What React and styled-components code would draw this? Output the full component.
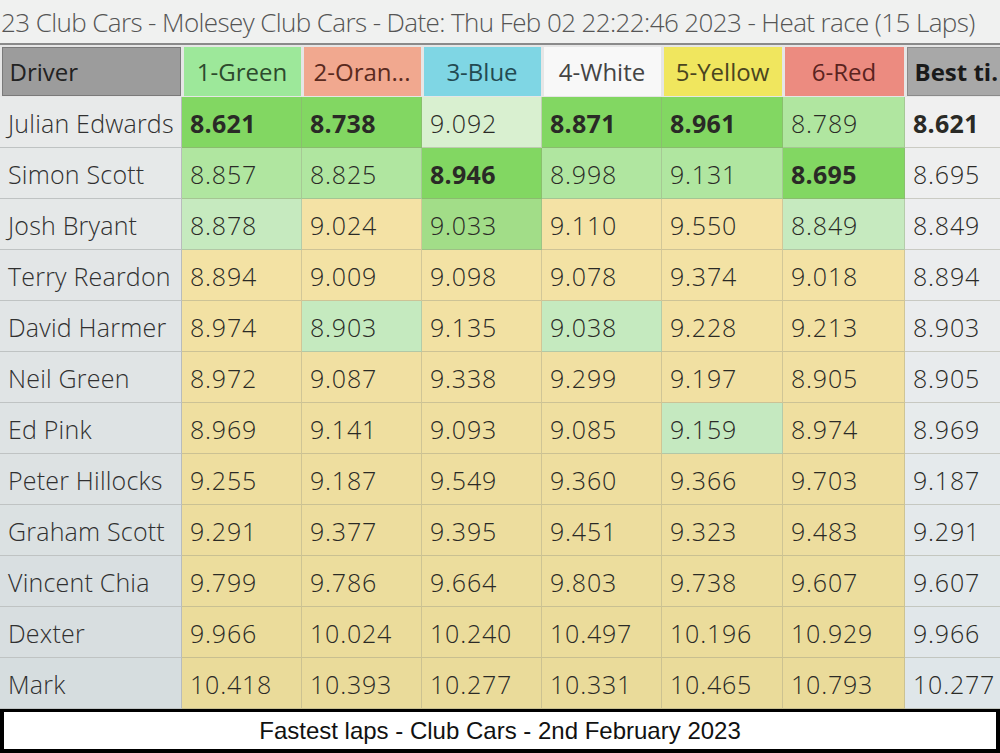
import React from 'react';
import styled, { createGlobalStyle } from 'styled-components';

const Global = createGlobalStyle`
  html, body { margin: 0; padding: 0; background: #ffffff; overflow: hidden; }
  #root { width: 1000px; height: 753px; }
`;

const COLS = '182px 120px 120px 120px 120px 121px 122px 110px';

const mix = (a, b, t) => {
  const pa = a.match(/\w\w/g).map(h => parseInt(h, 16));
  const pb = b.match(/\w\w/g).map(h => parseInt(h, 16));
  return '#' + pa.map((v, i) => Math.round(v + (pb[i] - v) * t).toString(16).padStart(2, '0')).join('');
};

const TONES = {
  B: ['82d762', '84d462'],
  G: ['a2dd88', 'a2dd88'],
  M: ['b0e6a0', 'b0e4a0'],
  L: ['c6ebbf', 'c4e8c0'],
  P: ['d9f0d0', 'd9f0d0'],
  Y: ['f6e4a8', 'eadb9a'],
};

const tone = (t, row) => {
  const [a, b] = TONES[t];
  return mix(a, b, row / 11);
};

const Page = styled.div`
  width: 1000px;
  height: 753px;
  display: flex;
  flex-direction: column;
  overflow: hidden;
  font-family: 'Open Sans', 'Noto Sans', sans-serif;
  background: #e9eaea;
`;

const TitleBar = styled.div`
  height: 43px;
  flex: none;
  display: flex;
  align-items: center;
  padding-left: 1px;
  background: #f0f1f0;
  border-bottom: 2px solid #8a8a8a;
  color: #555;
  font-size: 26px;
  font-weight: 300;
  letter-spacing: -0.6px;
  white-space: nowrap;
  overflow: hidden;
`;

const Grid = styled.div`
  display: grid;
  grid-template-columns: ${COLS};
  width: 1005px;
`;

const HeadRow = styled(Grid)`
  height: 52px;
  flex: none;
  background: #e6e6e6;
`;

const HeadCell = styled.div`
  margin: 2px 1.5px 1px;
  background: ${p => p.$bg};
  border: 1px solid ${p => p.$edge || 'transparent'};
  display: flex;
  align-items: center;
  justify-content: ${p => (p.$left ? 'flex-start' : 'center')};
  padding: 0 ${p => (p.$left ? '7px' : '0')};
  font-size: 24px;
  font-weight: ${p => (p.$bold ? 700 : 400)};
  color: ${p => p.$ink || '#333'};
  white-space: nowrap;
  overflow: hidden;
`;

const BodyRow = styled(Grid)`
  height: 51px;
  flex: none;
`;

const Cell = styled.div`
  display: flex;
  align-items: center;
  padding: 2px 0 0 8px;
  font-size: 25px;
  letter-spacing: ${p => (p.$bold ? '0.3px' : '0.8px')};
  color: #2a2a26;
  font-weight: ${p => (p.$bold ? 700 : 300)};
  background: ${p => p.$bg};
  border-right: 1px solid rgba(150, 150, 130, 0.35);
  border-bottom: 1px solid rgba(150, 150, 130, 0.4);
  white-space: nowrap;
  overflow: hidden;
`;

const NameCell = styled(Cell)`
  color: #303030;
  letter-spacing: 0.2px;
  border-right: 1px solid #b8bcbc;
  border-bottom: 1px solid #bfc3c3;
`;

const Caption = styled.div`
  flex: 1;
  background: #ffffff;
  border: 4px solid #000;
  border-top-width: 3px;
  display: flex;
  align-items: center;
  justify-content: center;
  font-family: 'Liberation Sans', Arial, sans-serif;
  font-size: 24px;
  color: #111;
`;

const heads = [
  { label: 'Driver', bg: '#9c9c9c', edge: '#7a7a7a', left: true, ink: '#222' },
  { label: '1-Green', bg: '#9de89a', ink: '#2d4a2d' },
  { label: '2-Oran...', bg: '#f1a88f', ink: '#5a2a1e' },
  { label: '3-Blue', bg: '#7fd6e4', ink: '#234a52' },
  { label: '4-White', bg: '#f8f8f8', ink: '#444' },
  { label: '5-Yellow', bg: '#f0e65e', ink: '#4a4520' },
  { label: '6-Red', bg: '#ec8b80', ink: '#5a231e' },
  { label: 'Best ti.', bg: '#a8a8a8', edge: '#8a8a8a', left: true, bold: true, ink: '#1a1a1a' },
];

const rows = [
  ['Julian Edwards', ['8.621B', '8.738B', '9.092P', '8.871B', '8.961B', '8.789M'], '8.621', true],
  ['Simon Scott', ['8.857M', '8.825M', '8.946B', '8.998M', '9.131M', '8.695B'], '8.695'],
  ['Josh Bryant', ['8.878L', '9.024Y', '9.033G', '9.110Y', '9.550Y', '8.849L'], '8.849'],
  ['Terry Reardon', ['8.894Y', '9.009Y', '9.098Y', '9.078Y', '9.374Y', '9.018Y'], '8.894'],
  ['David Harmer', ['8.974Y', '8.903L', '9.135Y', '9.038L', '9.228Y', '9.213Y'], '8.903'],
  ['Neil Green', ['8.972Y', '9.087Y', '9.338Y', '9.299Y', '9.197Y', '8.905Y'], '8.905'],
  ['Ed Pink', ['8.969Y', '9.141Y', '9.093Y', '9.085Y', '9.159L', '8.974Y'], '8.969'],
  ['Peter Hillocks', ['9.255Y', '9.187Y', '9.549Y', '9.360Y', '9.366Y', '9.703Y'], '9.187'],
  ['Graham Scott', ['9.291Y', '9.377Y', '9.395Y', '9.451Y', '9.323Y', '9.483Y'], '9.291'],
  ['Vincent Chia', ['9.799Y', '9.786Y', '9.664Y', '9.803Y', '9.738Y', '9.607Y'], '9.607'],
  ['Dexter', ['9.966Y', '10.024Y', '10.240Y', '10.497Y', '10.196Y', '10.929Y'], '9.966'],
  ['Mark', ['10.418Y', '10.393Y', '10.277Y', '10.331Y', '10.465Y', '10.793Y'], '10.277'],
];

export default function App() {
  return (
    <>
      <Global />
      <Page>
        <TitleBar>23 Club Cars - Molesey Club Cars - Date: Thu Feb 02 22:22:46 2023 - Heat race (15 Laps)</TitleBar>
        <HeadRow>
          {heads.map(h => (
            <HeadCell key={h.label} $bg={h.bg} $edge={h.edge} $left={h.left} $bold={h.bold} $ink={h.ink}>
              {h.label}
            </HeadCell>
          ))}
        </HeadRow>
        {rows.map(([name, laps, best, bestBold], r) => (
          <BodyRow key={name}>
            <NameCell $bg={mix('e8eaea', 'd6dddf', r / 11)}>{name}</NameCell>
            {laps.map((v, i) => {
              const t = v.slice(-1);
              return (
                <Cell key={i} $bg={tone(t, r)} $bold={t === 'B'}>
                  {v.slice(0, -1)}
                </Cell>
              );
            })}
            <Cell $bg={mix('f0f0f0', 'dfe6e9', r / 11)} $bold={bestBold}>
              {best}
            </Cell>
          </BodyRow>
        ))}
        <Caption>Fastest laps - Club Cars - 2nd February 2023</Caption>
      </Page>
    </>
  );
}
